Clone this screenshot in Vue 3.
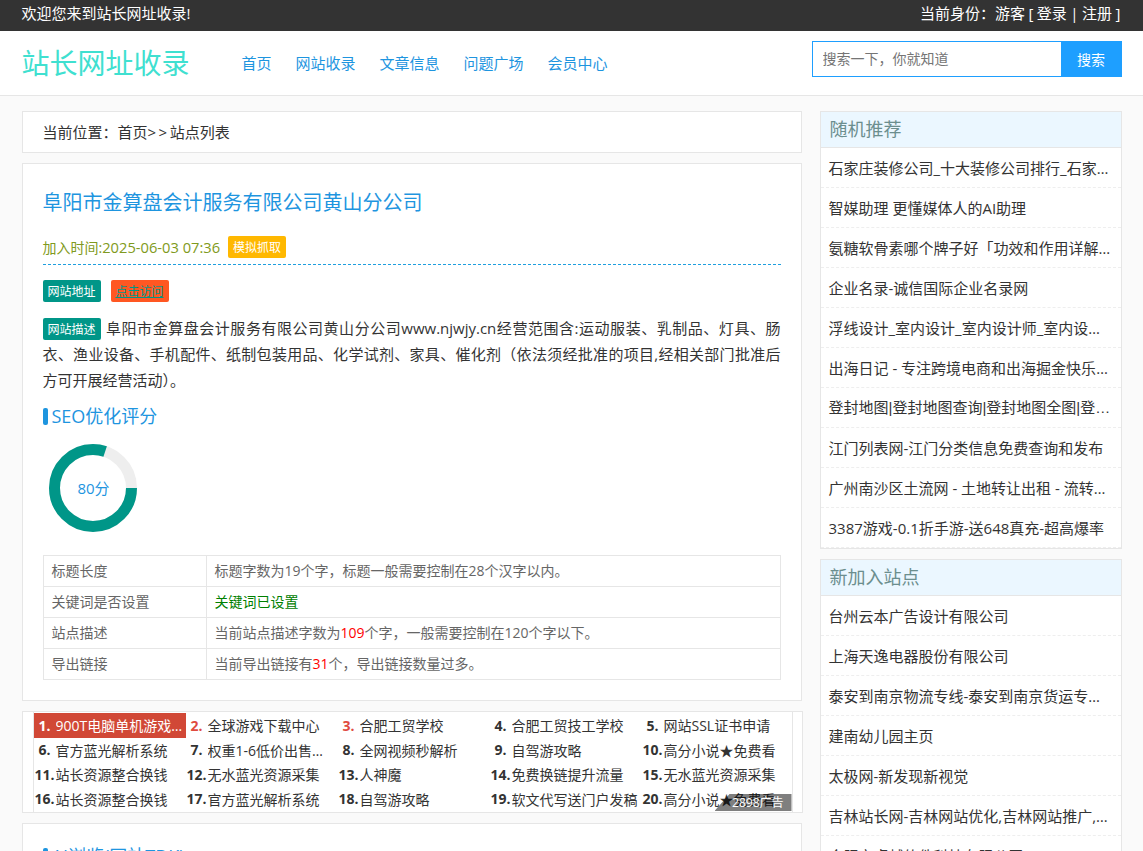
<script setup>
const nav = ['首页', '网站收录', '文章信息', '问题广场', '会员中心']

const seoRows = [
  { label: '标题长度', parts: [{ t: '标题字数为19个字，标题一般需要控制在28个汉字以内。' }] },
  { label: '关键词是否设置', parts: [{ t: '关键词已设置', c: 'ok' }] },
  { label: '站点描述', parts: [{ t: '当前站点描述字数为' }, { t: '109', c: 'bad' }, { t: '个字，一般需要控制在120个字以下。' }] },
  { label: '导出链接', parts: [{ t: '当前导出链接有' }, { t: '31', c: 'bad' }, { t: '个，导出链接数量过多。' }] },
]

const adLinks = [
  '900T电脑单机游戏下载网站', '全球游戏下载中心', '合肥工贸学校', '合肥工贸技工学校', '网站SSL证书申请',
  '官方蓝光解析系统', '权重1-6低价出售友情链接', '全网视频秒解析', '自驾游攻略', '高分小说★免费看',
  '站长资源整合换钱', '无水蓝光资源采集', '人神魔', '免费换链提升流量', '无水蓝光资源采集',
  '站长资源整合换钱', '官方蓝光解析系统', '自驾游攻略', '软文代写送门户发稿', '高分小说★免费看',
]

const sideBoxes = [
  {
    title: '随机推荐',
    items: [
      '石家庄装修公司_十大装修公司排行_石家庄装修公司哪家好',
      '智媒助理 更懂媒体人的AI助理',
      '氨糖软骨素哪个牌子好「功效和作用详解」推荐',
      '企业名录-诚信国际企业名录网',
      '浮线设计_室内设计_室内设计师_室内设计公司',
      '出海日记 - 专注跨境电商和出海掘金快乐分享',
      '登封地图|登封地图查询|登封地图全图|登封高清地图',
      '江门列表网-江门分类信息免费查询和发布',
      '广州南沙区土流网 - 土地转让出租 - 流转信息',
      '3387游戏-0.1折手游-送648真充-超高爆率',
    ],
  },
  {
    title: '新加入站点',
    items: [
      '台州云本广告设计有限公司',
      '上海天逸电器股份有限公司',
      '泰安到南京物流专线-泰安到南京货运专线公司',
      '建南幼儿园主页',
      '太极网-新发现新视觉',
      '吉林站长网-吉林网站优化,吉林网站推广,吉林建站',
      '合肥市卓越软件科技有限公司',
    ],
  },
]

// 80分 -> 环的周长按半径 38.5 算
const score = 80
const circle = 2 * Math.PI * 38.5
</script>

<template>
  <div class="page">
    <div class="top">
      <div class="wrap top-in">
        <span>欢迎您来到站长网址收录!</span>
        <span class="who">当前身份：游客 [ 登录 | 注册 ]</span>
      </div>
    </div>

    <header class="head">
      <div class="wrap head-in">
        <div class="logo">站长网址收录</div>
        <nav class="nav">
          <a v-for="n in nav" :key="n">{{ n }}</a>
        </nav>
        <div class="search">
          <input class="search-input" placeholder="搜索一下，你就知道" />
          <button class="search-btn">搜索</button>
        </div>
      </div>
    </header>

    <div class="wrap main">
      <div class="left">
        <div class="crumb">当前位置：首页<span class="crumb-gt">&gt;&gt;</span>站点列表</div>

        <article class="card">
          <h1 class="title">阜阳市金算盘会计服务有限公司黄山分公司</h1>
          <div class="meta">
            <span class="time">加入时间:<span class="time-num">2025-06-03 07:36</span></span>
            <span class="badge orange">模拟抓取</span>
          </div>
          <div class="tags">
            <span class="badge teal">网站地址</span>
            <a class="badge red">点击访问</a>
          </div>
          <p class="desc"><span class="badge teal desc-badge">网站描述</span>阜阳市金算盘会计服务有限公司黄山分公司www.njwjy.cn经营范围含:运动服装、乳制品、灯具、肠衣、渔业设备、手机配件、纸制包装用品、化学试剂、家具、催化剂（依法须经批准的项目,经相关部门批准后方可开展经营活动）。</p>

          <h2 class="sub">SEO优化评分</h2>
          <div class="donut">
            <svg width="88" height="88" viewBox="0 0 88 88">
              <circle cx="44" cy="44" r="38.5" fill="none" stroke="#eee" stroke-width="11" />
              <circle
                cx="44"
                cy="44"
                r="38.5"
                fill="none"
                stroke="#009688"
                stroke-width="11"
                :stroke-dasharray="`${circle * score / 100} ${circle}`"
              />
            </svg>
            <span class="donut-text">{{ score }}分</span>
          </div>

          <table class="seo">
            <tbody>
              <tr v-for="r in seoRows" :key="r.label">
                <td class="seo-label">{{ r.label }}</td>
                <td>
                  <span v-for="(p, i) in r.parts" :key="i" :class="p.c">{{ p.t }}</span>
                </td>
              </tr>
            </tbody>
          </table>
        </article>

        <div class="ad">
          <div class="ad-in">
            <div class="ad-grid">
              <div v-for="(a, i) in adLinks" :key="i" class="ad-cell" :class="{ first: i === 0, hot: i === 1 || i === 2 }">
                <b class="ad-num">{{ i + 1 }}.</b>
                <span class="ad-text">{{ a }}</span>
              </div>
            </div>
            <div class="ad-flag">2898广告</div>
          </div>
        </div>

        <article class="card card-next">
          <h2 class="sub">AI浏览(网站TDK)</h2>
        </article>
      </div>

      <aside class="side">
        <section v-for="box in sideBoxes" :key="box.title" class="side-box">
          <h3 class="side-title">{{ box.title }}</h3>
          <ul class="side-list">
            <li v-for="item in box.items" :key="item" :class="{ narrow: item.includes('|') }">{{ item }}</li>
          </ul>
        </section>
      </aside>
    </div>
  </div>
</template>

<style scoped>
.page {
  height: 100vh;
  overflow: hidden;
  background: #fafafa;
  color: #333;
  font-family: "Open Sans", "Noto Sans CJK SC", sans-serif;
  font-size: 14px;
}
.wrap {
  width: 1100px;
  margin: 0 auto;
}
.top {
  height: 31px;
  background: #333;
  color: #fff;
  font-size: 15px;
  line-height: 27px;
}
.top-in {
  display: flex;
  justify-content: space-between;
}
.who {
  padding-right: 1px;
  word-spacing: -0.4px;
}
.head {
  height: 65px;
  box-sizing: border-box;
  background: #fff;
  border-bottom: 1px solid #e6e6e6;
}
.head-in {
  display: flex;
  align-items: flex-start;
}
.logo {
  width: 220px;
  font-size: 28px;
  line-height: 64px;
  color: #3fe0d0;
}
.nav {
  display: flex;
  gap: 24px;
  font-size: 15px;
  line-height: 64px;
  color: #1e95df;
}
.search {
  margin-left: auto;
  margin-top: 10px;
  display: flex;
  width: 310px;
  height: 36px;
}
.search-input {
  flex: 1;
  min-width: 0;
  box-sizing: border-box;
  border: 1px solid #1e9fff;
  border-right: 0;
  padding: 0 10px 2px;
  outline: none;
  font: inherit;
  font-size: 14px;
}
.search-input::placeholder {
  color: #757575;
}
.search-btn {
  width: 61px;
  border: 0;
  background: #1e9fff;
  color: #fff;
  font: inherit;
  font-size: 14px;
  padding: 0;
}
.main {
  display: flex;
  justify-content: space-between;
  padding-top: 15px;
}
.left {
  width: 780px;
}
.crumb {
  height: 42px;
  box-sizing: border-box;
  border: 1px solid #e6e6e6;
  background: #fff;
  padding-left: 20px;
  font-size: 15px;
  line-height: 41px;
  margin-bottom: 10px;
}
.crumb-gt {
  letter-spacing: 2.5px;
}
.card {
  border: 1px solid #e6e6e6;
  background: #fff;
  padding: 20px;
  margin-bottom: 10px;
}
.title {
  margin: 0;
  font-size: 20px;
  font-weight: 400;
  line-height: 37px;
  height: 36px;
  color: #1e95df;
}
.meta {
  margin-top: 16px;
  padding-bottom: 6px;
  border-bottom: 1px dashed #1e9fdf;
  display: flex;
  align-items: center;
  gap: 8px;
  height: 22px;
}
.time {
  color: #7f9a20;
  line-height: 22px;
  height: 22px;
}
.time-num {
  font-size: 14.7px;
}
.badge {
  display: inline-block;
  width: 58px;
  height: 22px;
  border-radius: 2px;
  color: #fff;
  font-size: 12px;
  line-height: 23px;
  text-align: center;
}
.orange {
  background: #ffb800;
}
.teal {
  background: #009688;
}
.red {
  background: #ff5722;
  color: #009688;
  text-decoration: underline;
}
.tags {
  margin-top: 15px;
  display: flex;
  gap: 10px;
}
.desc {
  margin: 13px 0 0;
  font-size: 15px;
  line-height: 26px;
  text-align: justify;
}
.desc-badge {
  margin-right: 5px;
  vertical-align: 0;
}
.sub {
  position: relative;
  margin: 9px 0 0;
  padding-left: 9px;
  font-size: 18px;
  font-weight: 400;
  line-height: 28px;
  color: #1e95df;
}
.sub::before {
  content: "";
  position: absolute;
  left: 0;
  top: 6px;
  width: 5px;
  height: 17px;
  border-radius: 2px;
  background: #1e95df;
}
.donut {
  position: relative;
  width: 88px;
  height: 88px;
  margin: 14px 0 0 6px;
}
.donut svg {
  display: block;
}
.donut-text {
  position: absolute;
  left: 2px;
  right: 0;
  top: 0;
  text-align: center;
  line-height: 88px;
  font-size: 15px;
  color: #1e95df;
}
.seo {
  width: 100%;
  margin-top: 23px;
  border-collapse: collapse;
  table-layout: fixed;
  color: #666;
  font-size: 14px;
}
.seo td {
  height: 31px;
  box-sizing: border-box;
  padding: 0 8px 2px;
  border: 1px solid #e6e6e6;
}
.seo-label {
  width: 163px;
}
.ok {
  color: #008000;
}
.bad {
  color: #f00;
}
.ad {
  width: 781px;
  height: 102px;
  box-sizing: border-box;
  border: 1px solid #e6e6e6;
  background: #fff;
  padding-left: 10px;
  margin-bottom: 10px;
}
.ad-in {
  position: relative;
  width: 760px;
  height: 100px;
  box-sizing: border-box;
  border-left: 1px solid #e6e6e6;
  border-right: 1px solid #e6e6e6;
  padding-top: 1px;
  overflow: hidden;
}
.ad-grid {
  display: grid;
  grid-template-columns: repeat(5, 152px);
  grid-template-rows: 25px repeat(3, 24.5px);
}
.ad-cell {
  display: flex;
  align-items: center;
  min-width: 0;
  padding-bottom: 1px;
}
.ad-num {
  flex: none;
  width: 22px;
  display: flex;
  justify-content: center;
  white-space: nowrap;
}
.ad-text {
  flex: 1;
  min-width: 0;
  padding-right: 3px;
  white-space: nowrap;
  overflow: hidden;
  text-overflow: ellipsis;
}
.ad-cell.first {
  background: #d14836;
  color: #fff;
}
.ad-cell.hot .ad-num {
  color: #e04b3f;
}
.ad-flag {
  position: absolute;
  right: 0;
  bottom: 1px;
  width: 77px;
  height: 17px;
  box-sizing: border-box;
  padding-right: 8px;
  background: rgba(0, 0, 0, 0.5);
  clip-path: polygon(15px 0, 100% 0, 100% 100%, 0 100%);
  color: #fff;
  font-size: 12px;
  line-height: 17px;
  text-align: right;
}
.card-next {
  padding-top: 9px;
  height: 200px;
}
.side {
  width: 302px;
}
.side-box {
  border: 1px solid #e6e6e6;
  background: #fff;
  margin-bottom: 10px;
}
.side-title {
  margin: 0;
  height: 36px;
  box-sizing: border-box;
  padding-left: 9px;
  border-bottom: 1px solid #e6e6e6;
  background: #ebf7ff;
  color: #6b8e8e;
  font-size: 18px;
  font-weight: 400;
  line-height: 35px;
}
.side-list {
  margin: 0;
  padding: 0;
  list-style: none;
}
.side-list li {
  height: 40px;
  box-sizing: border-box;
  padding: 0 8px;
  border-bottom: 1px dashed #eee;
  font-size: 15px;
  line-height: 40px;
  white-space: nowrap;
  overflow: hidden;
  text-overflow: ellipsis;
}
.side-list li.narrow {
  font-family: "Liberation Sans", "Noto Sans CJK SC", sans-serif;
}
</style>

<style>
html,
body {
  margin: 0;
  background: #fafafa;
}
</style>
